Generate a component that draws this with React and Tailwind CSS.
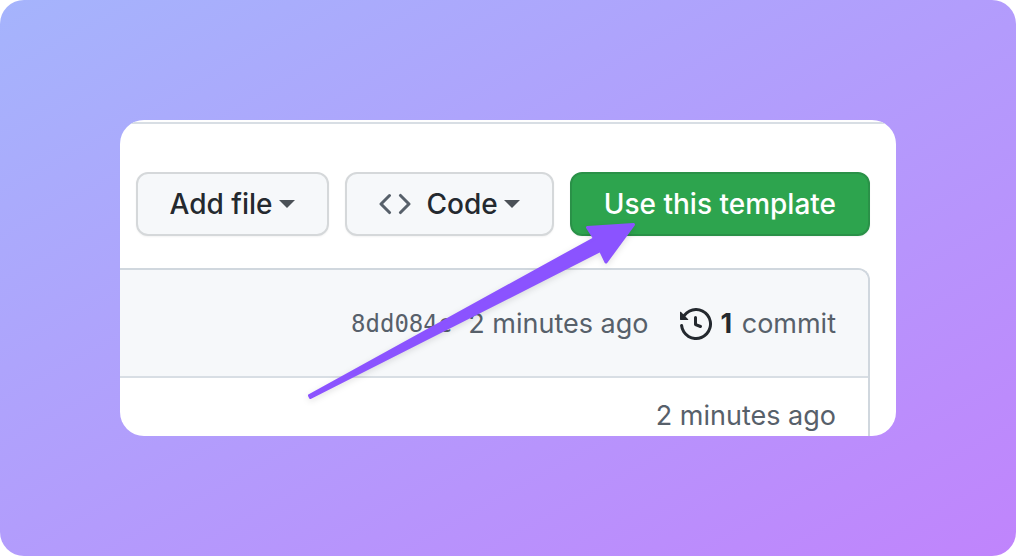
function Caret() {
  return (
    <svg aria-hidden="true" className="h-2 w-4 shrink-0" viewBox="0 0 16 8" fill="#4b5157">
      <path d="M0 0H16L8 8Z" />
    </svg>
  );
}

function CodeIcon() {
  return (
    <svg aria-hidden="true" className="size-8 shrink-0" viewBox="0 0 16 16" fill="#57606a">
      <path d="M4.72 3.22a.75.75 0 011.06 1.06L2.06 8l3.72 3.72a.75.75 0 11-1.06 1.06L.47 8.53a.75.75 0 010-1.06l4.25-4.25zm6.56 0a.75.75 0 10-1.06 1.06L13.94 8l-3.72 3.72a.75.75 0 101.06 1.06l4.25-4.25a.75.75 0 000-1.06l-4.25-4.25z" />
    </svg>
  );
}

function HistoryIcon() {
  return (
    <svg aria-hidden="true" className="size-8 shrink-0" viewBox="0 0 16 16" fill="#24292f">
      <path d="M1.643 3.143L.427 1.927A.25.25 0 000 2.104V5.75c0 .138.112.25.25.25h3.646a.25.25 0 00.177-.427L2.715 4.215a6.5 6.5 0 11-1.18 4.458.75.75 0 10-1.493.154 8.001 8.001 0 101.6-5.684zM7.75 4a.75.75 0 01.75.75v2.992l2.028.812a.75.75 0 01-.557 1.392l-2.5-1A.75.75 0 017 8.25v-3.5A.75.75 0 017.75 4z" />
    </svg>
  );
}

function PointerArrow() {
  return (
    <svg
      aria-hidden="true"
      className="pointer-events-none absolute top-[92px] right-[248px] h-[200px] w-[350px] drop-shadow-[0_2px_3px_rgba(0,0,0,0.12)]"
      viewBox="298 212 350 200"
    >
      <path
        d="M309.5 395.5L594.5 238.5L587.5 227.5L633.5 224.5L606 262L600.5 250.5L310.5 397.5Z"
        fill="#8b53ff"
        stroke="#8b53ff"
        strokeWidth="3"
        strokeLinejoin="round"
      />
    </svg>
  );
}

export default function App() {
  return (
    <main className="flex min-h-screen items-center rounded-3xl bg-[linear-gradient(to_bottom_right,#a5b4fc,#c084fc)] px-[120px] font-['Inter',sans-serif] text-[27px] leading-8 text-[#57606a]">
      <section className="relative w-full overflow-hidden rounded-3xl bg-white pt-0.5">
        <div className="border-t-2 border-[#d8dee4] pt-12 pr-[26px] pl-4">
          <div className="flex justify-end gap-4 text-[28px] font-medium whitespace-nowrap text-[#24292f]">
            <button type="button" className="flex h-16 items-center gap-1.5 rounded-xl border-2 border-[#d5d8da] bg-[#f6f8fa] px-8 shadow-xs">
              Add file
              <Caret />
            </button>
            <button type="button" className="flex h-16 items-center gap-1.5 rounded-xl border-2 border-[#d5d8da] bg-[#f6f8fa] px-8 shadow-xs">
              <CodeIcon />
              <span className="pl-2.5">Code</span>
              <Caret />
            </button>
            <button type="button" className="h-16 rounded-xl border-2 border-[#2a9148] bg-[#2da44e] px-8 text-white shadow-xs">
              Use this template
            </button>
          </div>
        </div>
        <div className="mt-8 mr-[26px] rounded-tr-xl border-t-2 border-r-2 border-[#d0d7de] whitespace-nowrap">
          <div className="flex items-center justify-end rounded-tr-[10px] border-b-2 border-[#d8dee4] bg-[#f6f8fa] pt-[38px] pr-8 pb-9">
            <a href="#commit" className="pr-4 font-['DejaVu_Sans_Mono',monospace] text-[24px]">8dd084c</a>
            <span>2 minutes ago</span>
            <a href="#commits" className="flex items-center gap-2 pl-8">
              <HistoryIcon />
              <span><strong className="mr-0.5 font-bold text-[#24292f]">1</strong> commit</span>
            </a>
          </div>
          <div className="pt-[22px] pr-8 pb-1 text-right">2 minutes ago</div>
        </div>
        <PointerArrow />
      </section>
    </main>
  );
}
